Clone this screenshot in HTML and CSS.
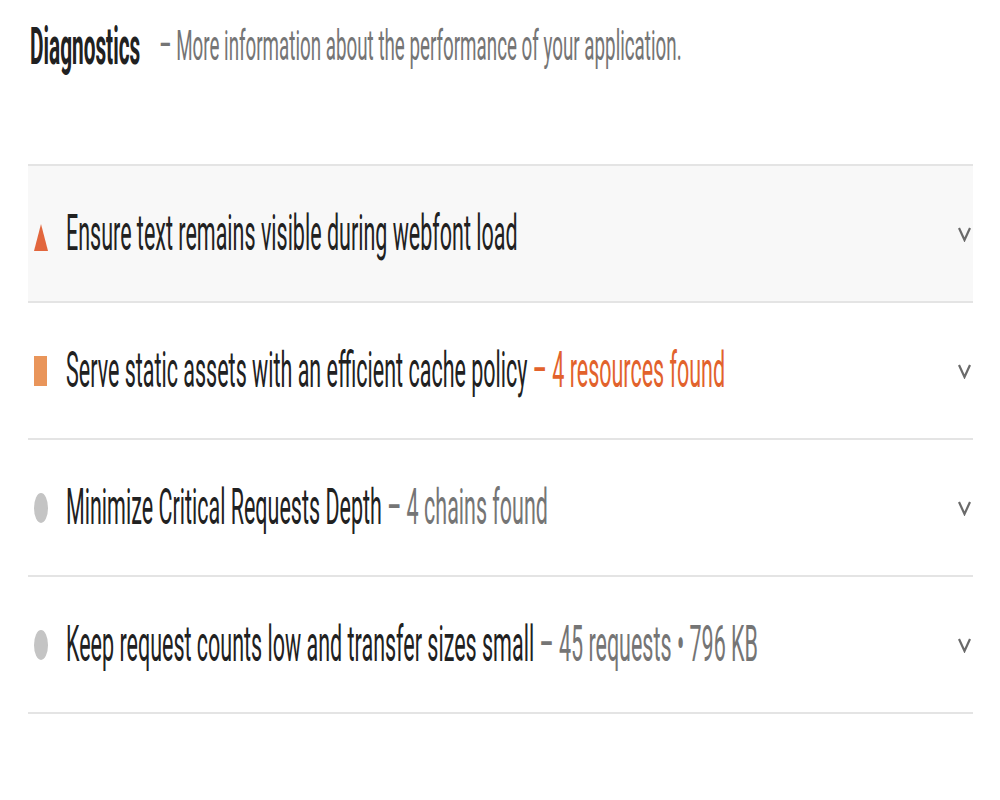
FILE: index.html
```html
<!DOCTYPE html>
<html lang="en">
<head>
  <meta charset="UTF-8">
  <title>Diagnostics</title>
  <link rel="stylesheet" href="styles.css">
</head>
<body>
  <section class="audit-group">
    <div class="group-header">
      <span class="tall group-title">Diagnostics</span>
      <span class="tall group-desc">&ndash; More information about the performance of your application.</span>
    </div>

    <div class="audit-list">
      <div class="audit audit-open">
        <span class="icon"><span class="tri"></span></span>
        <span class="tall audit-title">Ensure text remains visible during webfont load</span>
        <svg class="chevron" width="13" height="16" viewBox="0 0 13 16"><polyline points="1,2 6.5,14 12,2" fill="none" stroke="#6a6a6a" stroke-width="2.2"/></svg>
      </div>
      <div class="audit">
        <span class="icon"><span class="sq"></span></span>
        <span class="tall audit-title">Serve static assets with an efficient cache policy <span class="note note-warn">&ndash; 4 resources found</span></span>
        <svg class="chevron" width="13" height="16" viewBox="0 0 13 16"><polyline points="1,2 6.5,14 12,2" fill="none" stroke="#6a6a6a" stroke-width="2.2"/></svg>
      </div>
      <div class="audit">
        <span class="icon"><span class="dot"></span></span>
        <span class="tall audit-title">Minimize Critical Requests Depth <span class="note">&ndash; 4 chains found</span></span>
        <svg class="chevron" width="13" height="16" viewBox="0 0 13 16"><polyline points="1,2 6.5,14 12,2" fill="none" stroke="#6a6a6a" stroke-width="2.2"/></svg>
      </div>
      <div class="audit">
        <span class="icon"><span class="dot"></span></span>
        <span class="tall audit-title">Keep request counts low and transfer sizes small <span class="note">&ndash; 45 requests &bull; 796 KB</span></span>
        <svg class="chevron" width="13" height="16" viewBox="0 0 13 16"><polyline points="1,2 6.5,14 12,2" fill="none" stroke="#6a6a6a" stroke-width="2.2"/></svg>
      </div>
    </div>
  </section>
</body>
</html>
```

FILE: styles.css
```css
body {
  margin: 0;
  background: #fff;
  color: #212121;
  font-family: Roboto, "Liberation Sans", sans-serif;
}
.audit-group {
  padding: 0 27px 0 28px;
}
.tall {
  display: inline-block;
  line-height: 24px;
  white-space: nowrap;
  transform: scaleY(2.35);
}
.group-header {
  display: flex;
  align-items: center;
  gap: 19px;
  height: 164px;
  padding-left: 2px;
  box-sizing: border-box;
  padding-bottom: 72px;
}
.group-title {
  font-size: 20.8px;
  font-weight: 700;
  transform: scaleY(2.5);
}
.group-desc {
  font-size: 18.8px;
  color: #757575;
  transform: scaleY(2.25);
}
.audit-list {
  border-top: 2px solid #e4e4e4;
}
.audit {
  display: flex;
  align-items: center;
  height: 135px;
  border-bottom: 2px solid #e4e4e4;
  padding: 0 2px 0 6px;
}
.audit-open {
  background: #f8f8f8;
}
.icon {
  width: 32px;
  display: flex;
  align-items: center;
}
.tri {
  width: 0;
  height: 0;
  border-left: 7px solid transparent;
  border-right: 7px solid transparent;
  border-bottom: 27px solid #e2663d;
  margin-top: 8px;
}
.sq {
  width: 13px;
  height: 30px;
  background: #e9955a;
}
.dot {
  width: 14px;
  height: 30px;
  border-radius: 50%;
  background: #c4c4c4;
}
.audit-title {
  font-size: 21.5px;
}
.note {
  color: #757575;
}
.note-warn {
  color: #e2622c;
}
.chevron {
  margin-left: auto;
}
```
